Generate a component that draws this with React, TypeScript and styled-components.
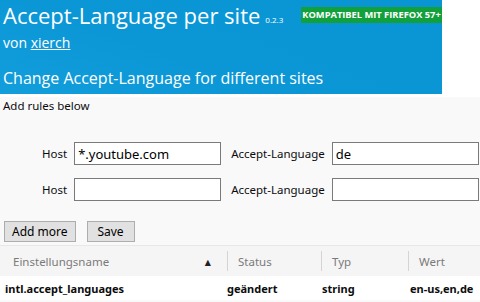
import React from "react";
import styled, { createGlobalStyle } from "styled-components";

const Global = createGlobalStyle`
  html, body {
    margin: 0;
    padding: 0;
    background: #fff;
  }
  body {
    width: 480px;
    height: 302px;
    overflow: hidden;
    font-family: "Noto Sans", "DejaVu Sans", sans-serif;
  }
`;

const Page = styled.div`
  width: 480px;
  height: 302px;
  display: flex;
  flex-direction: column;
  overflow: hidden;
`;

const Banner = styled.header`
  width: 442px;
  height: 94px;
  flex-shrink: 0;
  box-sizing: border-box;
  padding: 0 0 0 3px;
  background: linear-gradient(200deg, #0995d4 0%, #0b97d6 60%, #129ddb 100%);
  color: #fff;
  font-family: "Open Sans", sans-serif;
  display: flex;
  flex-direction: column;
  white-space: nowrap;
`;

const TitleRow = styled.div`
  display: flex;
  align-items: flex-start;
  height: 30px;
`;

const Title = styled.h1`
  margin: 0;
  font-size: 22px;
  font-weight: 400;
  line-height: 30px;
  flex-shrink: 0;
`;

const Version = styled.span`
  font-size: 8px;
  margin: 15px 0 0 5px;
  line-height: 10px;
`;

const Badge = styled.span`
  margin: 7px 0 0 auto;
  height: 16px;
  width: 141px;
  background: #12a03c;
  font-size: 9.3px;
  font-weight: 700;
  line-height: 16px;
  text-align: center;
`;

const Author = styled.div`
  font-size: 14px;
  line-height: 20px;
  margin-top: 3px;

  a {
    color: #fff;
  }
`;

const Description = styled.div`
  font-size: 16px;
  line-height: 24px;
  margin-top: 13px;
`;

const Main = styled.main`
  flex: 1;
  margin-top: 3px;
  background: #f9f9fa;
  color: #0c0c0d;
  display: flex;
  flex-direction: column;
`;

const Intro = styled.div`
  font-size: 11.5px;
  line-height: 16px;
  padding: 1px 3px 0;
`;

const Rules = styled.div`
  display: flex;
  flex-direction: column;
  gap: 13px;
  padding: 28px 2px 0 42px;
`;

const RuleRow = styled.div`
  display: flex;
  align-items: center;
  height: 23px;
`;

const Label = styled.label`
  font-size: 11.5px;
  margin-right: 7px;
  white-space: nowrap;
  flex-shrink: 0;
`;

const Input = styled.input<{ $gap?: number }>`
  box-sizing: border-box;
  flex-shrink: 0;
  width: 147px;
  height: 23px;
  margin: 0 ${(p) => p.$gap ?? 0}px 0 0;
  border: 1px solid #7a7a7a;
  background: #fff;
  padding: 0 3px;
  font-family: "Noto Sans", sans-serif;
  font-size: 13px;
  color: #000;
  outline: none;
`;

const Buttons = styled.div`
  display: flex;
  gap: 11px;
  padding: 20px 0 0 4px;
`;

const Button = styled.button`
  height: 21px;
  min-width: 48px;
  box-sizing: border-box;
  padding: 0 7px;
  border: 1px solid #adadad;
  background: #e1e1e1;
  font-family: "Noto Sans", sans-serif;
  font-size: 12px;
  color: #000;
  line-height: 19px;
`;

const Table = styled.div`
  margin-top: 3px;
  display: flex;
  flex-direction: column;
`;

const HeadRow = styled.div`
  display: grid;
  grid-template-columns: 227px 94px 87px 1fr;
  height: 30px;
  background: #f5f5f5;
  border-top: 1px solid #e8e8e8;
`;

const HeadCell = styled.div<{ $first?: boolean }>`
  display: flex;
  align-items: center;
  padding-left: ${(p) => (p.$first ? 13 : 10)}px;
  font-size: 11.5px;
  color: #7a7a7a;
  border-left: ${(p) => (p.$first ? "none" : "1px solid #d4d4d4")};
  margin: 5px 0;
`;

const SortArrow = styled.span`
  margin-left: auto;
  margin-right: 16px;
  font-size: 8px;
  color: #222;
`;

const DataRow = styled.div`
  display: grid;
  grid-template-columns: 227px 94px 87px 1fr;
  height: 24px;
  align-items: center;
  background: #fff;
  font-size: 11px;
  font-weight: 700;
  color: #0c0c0d;
`;

const DataCell = styled.div<{ $pad: number }>`
  padding-left: ${(p) => p.$pad}px;
  white-space: nowrap;
`;

export default function App() {
  return (
    <Page>
      <Global />
      <Banner>
        <TitleRow>
          <Title>Accept-Language per site</Title>
          <Version>0.2.3</Version>
          <Badge>KOMPATIBEL MIT FIREFOX 57+</Badge>
        </TitleRow>
        <Author>
          von <a href="#">xierch</a>
        </Author>
        <Description>Change Accept-Language for different sites</Description>
      </Banner>
      <Main>
        <Intro>Add rules below</Intro>
        <Rules>
          <RuleRow>
            <Label>Host</Label>
            <Input defaultValue="*.youtube.com" $gap={10} />
            <Label>Accept-Language</Label>
            <Input defaultValue="de" />
          </RuleRow>
          <RuleRow>
            <Label>Host</Label>
            <Input $gap={10} />
            <Label>Accept-Language</Label>
            <Input />
          </RuleRow>
        </Rules>
        <Buttons>
          <Button>Add more</Button>
          <Button>Save</Button>
        </Buttons>
        <Table>
          <HeadRow>
            <HeadCell $first>
              Einstellungsname
              <SortArrow>▲</SortArrow>
            </HeadCell>
            <HeadCell>Status</HeadCell>
            <HeadCell>Typ</HeadCell>
            <HeadCell>Wert</HeadCell>
          </HeadRow>
          <DataRow>
            <DataCell $pad={5}>intl.accept_languages</DataCell>
            <DataCell $pad={0}>geändert</DataCell>
            <DataCell $pad={1}>string</DataCell>
            <DataCell $pad={2}>en-us,en,de</DataCell>
          </DataRow>
        </Table>
      </Main>
    </Page>
  );
}
